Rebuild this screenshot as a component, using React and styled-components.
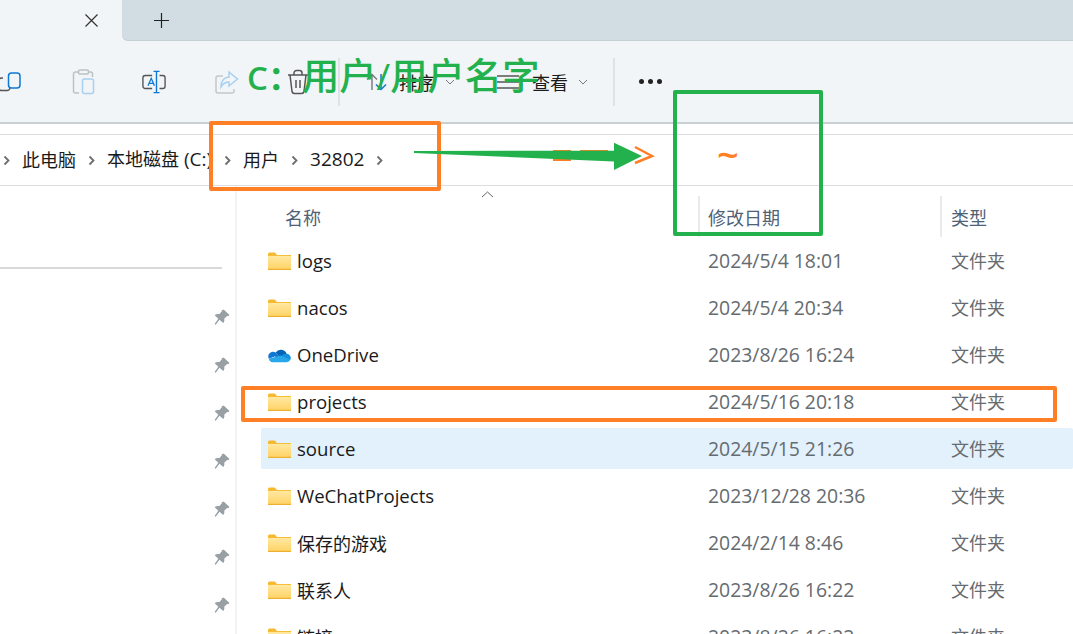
import { Fragment } from "react";
import styled, { createGlobalStyle } from "styled-components";

const GlobalStyle = createGlobalStyle`
  html, body {
    margin: 0;
    padding: 0;
    background: #fff;
  }
  body {
    font-family: "Open Sans", "Noto Sans CJK SC", sans-serif;
  }
`;

const files = [
  { name: "logs", date: "2024/5/4 18:01" },
  { name: "nacos", date: "2024/5/4 20:34" },
  { name: "OneDrive", date: "2023/8/26 16:24", cloud: true },
  { name: "projects", date: "2024/5/16 20:18" },
  { name: "source", date: "2024/5/15 21:26", selected: true },
  { name: "WeChatProjects", date: "2023/12/28 20:36" },
  { name: "保存的游戏", date: "2024/2/14 8:46", cjk: true },
  { name: "联系人", date: "2023/8/26 16:22", cjk: true },
  { name: "链接", date: "2023/8/26 16:22", cjk: true },
];

const crumbs = [
  { text: "此电脑" },
  { text: "本地磁盘", latin: " (C:)" },
  { text: "用户" },
  { latin: "32802" },
];
const pins = [0, 1, 2, 3, 4, 5, 6];

const Page = styled.div`
  position: relative;
  width: 1073px;
  height: 634px;
  overflow: hidden;
  background: #fff;
  color: #1a1a1a;
`;

const TabStrip = styled.div`
  display: flex;
  align-items: stretch;
  height: 41px;
  background: #f1f5f7;
`;

const Tab = styled.div`
  display: flex;
  flex: none;
  align-items: center;
  justify-content: flex-end;
  width: 122px;
  padding-right: 23px;
  box-sizing: border-box;
`;

const NewTab = styled.div`
  display: flex;
  flex: 1;
  align-items: center;
  padding-left: 31px;
  background: #d1dde2;
  border-bottom: 1px solid #c3cfd4;
  border-bottom-left-radius: 6px;
`;

const Toolbar = styled.div`
  display: flex;
  align-items: center;
  height: 81px;
  background: #f1f5f7;
  border-bottom: 2px solid #c8d0d3;
`;

const ToolIcon = styled.div`
  display: flex;
  flex: none;
  width: 24px;
  height: 26px;
  margin-left: ${(p) => p.$gap}px;
`;

const Divider = styled.div`
  flex: none;
  width: 2px;
  height: 48px;
  margin-left: ${(p) => p.$gap}px;
  background: #dfe3e5;
`;

const ToolLabel = styled.div`
  display: flex;
  flex: none;
  align-items: center;
  margin-left: ${(p) => p.$gap}px;
  font-size: 18px;
  color: #1b1b1b;
`;

const Dots = styled.div`
  display: flex;
  gap: 4px;
  margin-left: 24px;
`;

const Dot = styled.span`
  width: 5px;
  height: 5px;
  border-radius: 50%;
  background: #222;
`;

const AddressBar = styled.div`
  padding-top: 10px;
`;

const Crumbs = styled.div`
  display: flex;
  align-items: center;
  height: 50px;
  padding-left: 3px;
  border-top: 1px solid #dcdfe1;
  border-bottom: 1px solid #dcdfe1;
  font-size: 18px;
`;

const Crumb = styled.span`
  margin: 0 12px 3px;
  white-space: pre;
`;

const LatinRun = styled.span`
  font-size: 19px;
`;

const Body = styled.div`
  display: flex;
  height: 448px;
`;

const Sidebar = styled.div`
  flex: none;
  width: 237px;
  box-sizing: border-box;
  border-right: 2px solid #f3f4f5;
`;

const SideRule = styled.div`
  width: 222px;
  height: 2px;
  margin-top: 81px;
  background: #d9d9d9;
`;

const PinList = styled.div`
  display: flex;
  flex-direction: column;
  align-items: flex-end;
  gap: 31px;
  margin-top: 40px;
  padding-right: 5px;
`;

const Files = styled.div`
  flex: 1;
  min-width: 0;
`;

const HeaderRow = styled.div`
  position: relative;
  display: grid;
  grid-template-columns: 437px 242px 1fr;
  height: 54px;
  margin-left: 24px;
  color: #4d6177;
  font-size: 18px;
`;

const SortCaret = styled.div`
  position: absolute;
  left: 220px;
  top: 5px;
  display: flex;
`;

const HeaderCell = styled.div`
  display: flex;
  align-items: center;
  height: 41px;
  margin-top: 10px;
  padding-left: ${(p) => p.$pad}px;
  box-sizing: border-box;
  border-left: ${(p) => (p.$rule ? "2px solid #e8eaeb" : "none")};
`;

const FileRow = styled.div`
  display: grid;
  grid-template-columns: 437px 242px 1fr;
  align-items: center;
  height: 41px;
  margin: 0 0 6px 24px;
  background: ${(p) => (p.$selected ? "#e2f1fc" : "transparent")};
  border-radius: 2px;
`;

const NameCell = styled.div`
  display: flex;
  align-items: center;
  gap: 6px;
  padding-left: 7px;
  font-size: ${(p) => (p.$cjk ? 18 : 18.6)}px;
  color: #1a1a1a;
  white-space: nowrap;
`;

const DateCell = styled.div`
  padding-left: 10px;
  font-size: 19.400px;
  color: #666b70;
  white-space: nowrap;
`;

const TypeCell = styled.div`
  padding: 0 0 2px 11px;
  font-size: 18px;
  color: #666b70;
  white-space: nowrap;
`;

const Note = styled.div`
  position: absolute;
  left: ${(p) => p.$x}px;
  top: ${(p) => p.$y}px;
  width: ${(p) => p.$w}px;
  height: ${(p) => p.$h}px;
  box-sizing: border-box;
  border: 4px solid ${(p) => p.$color};
  border-radius: 2px;
`;

const GreenTitle = styled.div`
  position: absolute;
  left: 247px;
  top: 44px;
  display: flex;
  align-items: center;
  height: 60px;
  color: #22b14c;
  white-space: nowrap;
`;

const DriveLabel = styled.span`
  width: 55px;
  padding-top: 4px;
  font-size: 33px;
  font-weight: 600;
`;

const PathLabel = styled.span`
  font-size: 37.300px;
  font-weight: 500;
`;

const Tilde = styled.div`
  position: absolute;
  left: 717px;
  top: 129px;
  font-size: 38px;
  font-weight: 600;
  line-height: 50px;
  color: #ff7f27;
`;

const ArrowOverlay = styled.svg`
  position: absolute;
  left: 410px;
  top: 135px;
`;

const FolderIcon = () => (
  <svg width="23" height="18" viewBox="0 0 23 18">
    <defs>
      <linearGradient id="folderFill" x1="0" y1="0" x2="0" y2="1">
        <stop offset="0" stopColor="#ffeaa6" />
        <stop offset="1" stopColor="#ffd263" />
      </linearGradient>
    </defs>
    <path d="M0 2a1.500 1.500 0 0 1 1.500-1.500h5.200L9 3H0z" fill="#f6b82c" />
    <rect x="0" y="3" width="23" height="15" rx="1" fill="url(#folderFill)" />
    <rect x="0" y="16.800" width="23" height="1.200" fill="#eeb031" />
    <rect x="0" y="3" width="23" height="1" fill="#f5bd3a" />
  </svg>
);

const CloudIcon = () => (
  <svg width="23" height="16" viewBox="0 0 24 16">
    <path d="M8 5.500A6.500 6.500 0 0 1 19.500 6.800L13 11.500z" fill="#0364b8" />
    <path d="M8 5.500a5.200 5.200 0 0 0-2.900-.8A4.800 4.800 0 0 0 .9 11.800L7 9.500 13 11.500z" fill="#0f78d4" />
    <path d="M19.500 6.800a4.800 4.800 0 0 0-1.200-.2c-1.700 0-3.200.8-4.300 2.100L11 11 18 14.500l5.400-1.500A4.500 4.500 0 0 0 19.500 6.800z" fill="#1490df" />
    <path d="M.9 11.800A4.500 4.500 0 0 0 5 15.500H19.500A4.500 4.500 0 0 0 23.400 13L13 8.500z" fill="#28a8ea" />
  </svg>
);

const PinIcon = () => (
  <svg width="16" height="17" viewBox="0 0 16 17">
    <path d="M9.700 0.500 15.500 6l-1.300 1.200-1.100-.3-2.900 2.800c.5 1.700.1 3-1 4.200L5.500 10.800 1.700 15.800.600 15l3.700-5.300-3.600-3.400c1.200-1.100 2.600-1.500 4.300-1L7.800 2.500l-.2-1z" fill="#98a0a6" />
  </svg>
);

const Chevron = styled.svg`
  flex: none;
  margin-left: ${(p) => p.$gap || 0}px;
`;

const CrumbChevron = () => (
  <Chevron width="7" height="11" viewBox="0 0 7 11">
    <path d="M1.500 1.500 5.500 5.500 1.500 9.500" fill="none" stroke="#6e6e6e" strokeWidth="1.800" />
  </Chevron>
);

const DownChevron = ({ gap }) => (
  <Chevron $gap={gap} width="10" height="6" viewBox="0 0 10 6">
    <path d="M1 1 5 5 9 1" fill="none" stroke="#777" strokeWidth="1" />
  </Chevron>
);

export default function App() {
  return (
    <Page>
      <GlobalStyle />
      <TabStrip>
        <Tab>
          <svg width="15" height="15" viewBox="0 0 15 15">
            <path d="M1.500 1.500 13.500 13.500M13.500 1.500 1.500 13.500" stroke="#333" strokeWidth="1.200" fill="none" />
          </svg>
        </Tab>
        <NewTab>
          <svg width="17" height="17" viewBox="0 0 17 17">
            <path d="M8.500 1V16M1 8.500H16" stroke="#222" strokeWidth="1.200" fill="none" />
          </svg>
        </NewTab>
      </TabStrip>

      <Toolbar>
        <ToolIcon $gap={0}>
          <svg width="24" height="26" viewBox="0 0 24 26">
            <path d="M3 9H1.500A2.500 2.500 0 0 0-1 11.500V19a2.500 2.500 0 0 0 2.500 2.500H7a3 3 0 0 0 3-2.500" fill="none" stroke="#555" strokeWidth="1.500" />
            <rect x="8.500" y="4" width="11.500" height="15" rx="3" fill="none" stroke="#0f78d4" strokeWidth="1.500" />
          </svg>
        </ToolIcon>
        <ToolIcon $gap={48}>
          <svg width="24" height="26" viewBox="0 0 24 26">
            <path d="M7 3H3.500A2 2 0 0 0 1.500 5v17a2 2 0 0 0 2 2H7M16 3h2.500a2 2 0 0 1 2 2v3" fill="none" stroke="#bcc1c4" strokeWidth="1.500" />
            <rect x="6.500" y="1" width="10" height="4" rx="1.500" fill="none" stroke="#bcc1c4" strokeWidth="1.500" />
            <rect x="10.500" y="10" width="11" height="14.500" rx="2" fill="none" stroke="#a8d0f0" strokeWidth="1.500" />
          </svg>
        </ToolIcon>
        <ToolIcon $gap={46}>
          <svg width="26" height="26" viewBox="0 0 26 26">
            <path d="M11 6H3.500A2.500 2.500 0 0 0 1 8.500v9A2.500 2.500 0 0 0 3.500 20H11M19 6h3.500A2.500 2.500 0 0 1 25 8.500v9a2.500 2.500 0 0 1-2.500 2.500H19" fill="none" stroke="#555" strokeWidth="1.500" />
            <path d="M12.500 1.500H19M12.500 24.500H19M15.700 1.500v23" fill="none" stroke="#0f78d4" strokeWidth="1.500" />
            <path d="M6.500 17 10 9l3.500 8M7.800 14.500h4.500" fill="none" stroke="#0f78d4" strokeWidth="1.400" />
          </svg>
        </ToolIcon>
        <ToolIcon $gap={49}>
          <svg width="24" height="26" viewBox="0 0 24 26">
            <path d="M8 7H3A2 2 0 0 0 1 9v13a2 2 0 0 0 2 2h14a2 2 0 0 0 2-2v-2" fill="none" stroke="#c3c7ca" strokeWidth="1.500" />
            <path d="M14 3 22.500 10 14 17v-4c-4 0-6 1.500-8 5 0-6 3-9.500 8-10z" fill="none" stroke="#a8d0f0" strokeWidth="1.500" />
          </svg>
        </ToolIcon>
        <ToolIcon $gap={48}>
          <svg width="22" height="26" viewBox="0 0 22 26">
            <path d="M1 6H21M7 6V4a2.500 2.500 0 0 1 2.500-2.500h3A2.500 2.500 0 0 1 15 4v2M3 6l2 16.500A2.500 2.500 0 0 0 7.500 24.500h7a2.500 2.500 0 0 0 2.500-2L19 6M9 11v8M13 11v8" fill="none" stroke="#555" strokeWidth="1.500" />
          </svg>
        </ToolIcon>
        <Divider $gap={27} />
        <ToolIcon $gap={25}>
          <svg width="24" height="26" viewBox="0 0 24 26">
            <path d="M7 21V6M2 10.500 7 5.500 12 10.500" fill="none" stroke="#777" strokeWidth="1.400" />
            <path d="M16 5V20M11 15.500 16 20.500 21 15.500" fill="none" stroke="#0f78d4" strokeWidth="1.500" />
          </svg>
        </ToolIcon>
        <ToolLabel $gap={10}>
          排序
          <DownChevron gap={10} />
        </ToolLabel>
        <ToolIcon $gap={41}>
          <svg width="24" height="26" viewBox="0 0 24 26">
            <path d="M1 7H23M1 13H23M1 19H23" fill="none" stroke="#555" strokeWidth="1.500" />
          </svg>
        </ToolIcon>
        <ToolLabel $gap={12}>
          查看
          <DownChevron gap={10} />
        </ToolLabel>
        <Divider $gap={25} />
        <Dots>
          <Dot />
          <Dot />
          <Dot />
        </Dots>
      </Toolbar>

      <AddressBar>
        <Crumbs>
          <CrumbChevron />
          {crumbs.map((c) => (
            <Fragment key={c.text || c.latin}>
              <Crumb>
                {c.text}
                {c.latin && <LatinRun>{c.latin}</LatinRun>}
              </Crumb>
              <CrumbChevron />
            </Fragment>
          ))}
        </Crumbs>
      </AddressBar>

      <Body>
        <Sidebar>
          <SideRule />
          <PinList>
            {pins.map((p) => (
              <PinIcon key={p} />
            ))}
          </PinList>
        </Sidebar>
        <Files>
          <HeaderRow>
            <SortCaret>
              <svg width="13" height="7" viewBox="0 0 13 7">
                <path d="M1 6 6.500 1 12 6" fill="none" stroke="#666" strokeWidth="1" />
              </svg>
            </SortCaret>
            <HeaderCell $pad={24}>名称</HeaderCell>
            <HeaderCell $pad={8} $rule>修改日期</HeaderCell>
            <HeaderCell $pad={9} $rule>类型</HeaderCell>
          </HeaderRow>
          {files.map((f) => (
            <FileRow key={f.name} $selected={f.selected}>
              <NameCell $cjk={f.cjk}>
                {f.cloud ? <CloudIcon /> : <FolderIcon />}
                {f.name}
              </NameCell>
              <DateCell>{f.date}</DateCell>
              <TypeCell>文件夹</TypeCell>
            </FileRow>
          ))}
        </Files>
      </Body>

      <Note $x={209} $y={121} $w={232} $h={70} $color="#ff7f27" />
      <Note $x={241} $y={386} $w={816} $h={36} $color="#ff7f27" />
      <Note $x={673} $y={90} $w={150} $h={146} $color="#22b14c" />
      <GreenTitle>
        <DriveLabel>C：</DriveLabel>
        <PathLabel>用户/用户名字</PathLabel>
      </GreenTitle>
      <Tilde>~</Tilde>
      <ArrowOverlay width="250" height="40" viewBox="0 0 250 40">
        <path d="M143 20.500H161" stroke="#ff7f27" strokeWidth="11" fill="none" />
        <path d="M170 18H198" stroke="#ff7f27" strokeWidth="6" fill="none" />
        <path d="M225 12 242 21 225 28" fill="none" stroke="#ff7f27" strokeWidth="2.500" />
        <path d="M4 16 204 15.700V7.700L232 21 204 35V26.500L4 18z" fill="#22b14c" />
      </ArrowOverlay>
    </Page>
  );
}
